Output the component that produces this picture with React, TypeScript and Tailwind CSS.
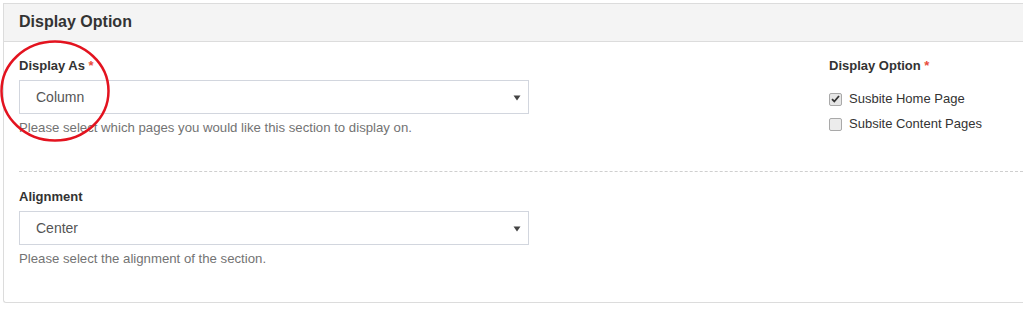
function Caret() {
  return (
    <svg width="8" height="6" viewBox="0 0 8 6" className="absolute right-[7px] top-[14px]">
      <path d="M0.5 0.5 L7.5 0.5 L4 5.5 Z" fill="#444" />
    </svg>
  );
}

function SelectBox({ value }: { value: string }) {
  return (
    <div className="relative mt-[5px] h-[34px] w-[510px] border border-[#d2d6de] bg-white pl-[16px] text-[14px] leading-[32px] text-[#555]">
      {value}
      <Caret />
    </div>
  );
}

export default function App() {
  return (
    <div className="relative h-[312px] w-[1023px] overflow-hidden bg-white font-['Liberation_Sans',Arial,sans-serif] text-[#333]">
      <div className="ml-[3px] mt-[3px] h-[300px] rounded-bl-[3px] border-b border-l border-t border-[#dcdcdc]">
        <div className="h-[38px] border-b border-[#dcdcdc] bg-[#f4f4f4] pl-[15px] text-[16px] font-bold leading-[36px] text-[#333]">
          Display Option
        </div>
        <div className="flex pl-[15px]">
          <div className="w-[810px]">
            <div className="pt-[15px] text-[13px] font-bold leading-[18px]">
              Display As <span className="text-[#e74c3c]">*</span>
            </div>
            <SelectBox value="Column" />
            <div className="mt-[6px] text-[13.2px] leading-[16px] text-[#737373]">
              Please select which pages you would like this section to display on.
            </div>
          </div>
          <div className="pt-[15px]">
            <div className="text-[13px] font-bold leading-[18px]">
              Display Option <span className="text-[#e74c3c]">*</span>
            </div>
            <div className="mt-[16px] flex items-center gap-[7px] text-[13px] leading-[16px]">
              <span className="flex h-[13px] w-[13px] items-center justify-center rounded-[2px] border border-[#a9a9a9] bg-[#e6e6e6]">
                <svg width="9" height="8" viewBox="0 0 9 8">
                  <path d="M1 4.2 L3.3 6.5 L8 1" stroke="#333" strokeWidth="1.8" fill="none" />
                </svg>
              </span>
              Susbite Home Page
            </div>
            <div className="mt-[9px] flex items-center gap-[7px] text-[13px] leading-[16px]">
              <span className="h-[13px] w-[13px] rounded-[2px] border border-[#a9a9a9] bg-[#ececec]" />
              Subsite Content Pages
            </div>
          </div>
        </div>
        <div className="ml-[15px] mt-[35px] border-t border-dashed border-[#cfcfcf]" />
        <div className="pl-[15px]">
          <div className="pt-[16px] text-[13px] font-bold leading-[18px]">Alignment</div>
          <SelectBox value="Center" />
          <div className="mt-[6px] text-[13.2px] leading-[16px] text-[#737373]">
            Please select the alignment of the section.
          </div>
        </div>
      </div>
      <svg className="absolute left-0 top-0" width="120" height="150" viewBox="0 0 120 150">
        <ellipse cx="55" cy="91" rx="53.5" ry="49.5" fill="none" stroke="#e3131f" strokeWidth="2.5" />
      </svg>
    </div>
  );
}
